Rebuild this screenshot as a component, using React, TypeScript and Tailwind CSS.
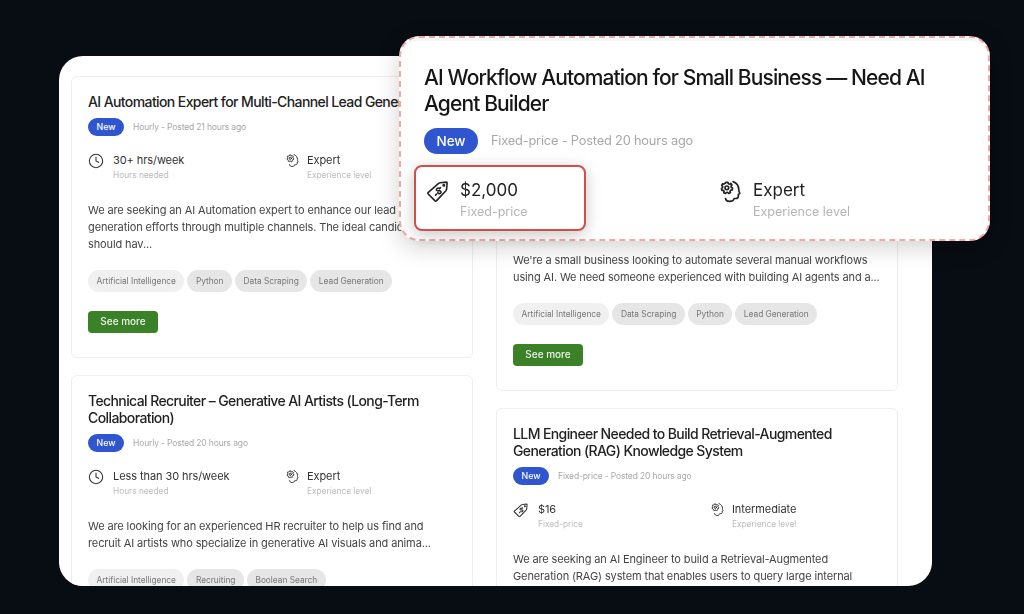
import { Clock } from "lucide-react";

const font = { fontFamily: "Inter, 'Liberation Sans', sans-serif" };

function TagIcon({ className }: { className: string }) {
  return (
    <svg viewBox="0 0 24 24" fill="none" stroke="currentColor" strokeWidth="1.6" strokeLinecap="round" strokeLinejoin="round" className={className}>
      <path d="M2.600 13.200 12.600 4.400c.5-.4 1-.6 1.600-.6l6.200-.7c.4 0 .7.3.7.7l-.5 6.300c0 .6-.3 1.100-.7 1.600l-9.300 9.900c-.5.5-1.300.5-1.800 0l-6.600-6.600c-.5-.5-.5-1.300 0-1.800Z" />
      <circle cx="17.800" cy="6.300" r="0.700" />
      <path d="M13.600 9.700c-.7-.8-1.900-.9-2.600-.2-.7.6-.7 1.500-.1 2 .5.500 1.200.4 1.900.3.800-.1 1.500-.1 1.900.4.500.6.400 1.400-.2 1.900-.8.700-1.900.6-2.700-.2M14.500 8.700l-1 1.100M10.500 15.100l-1 1.100" />
    </svg>
  );
}

function HeadIcon({ className }: { className: string }) {
  return (
    <svg viewBox="0 0 24 24" fill="none" stroke="currentColor" strokeWidth="1.6" strokeLinecap="round" strokeLinejoin="round" className={className}>
      <path d="M14.500 2.500c3.500 1.300 5.500 4.500 5.500 8 0 1-.1 1.500.8 2.800.3.600 0 1-.5 1.100l-.8.200v1.900c0 1.500-1 2.200-2.500 2.200h-1.500c-.3 2-2 2.800-4.500 2.800-1.900 0-3.400-.9-3.800-2.800" />
      <circle cx="8.500" cy="8.500" r="1.800" />
      <path d="M7.500 3.200h2l.4 1.300 1.300.5 1.200-.7 1 1.500-.9 1 .3 1.400 1.200.5-.4 1.900-1.300.1-.8 1.100.5 1.200-1.700.9-.9-1-1.400.1-.8 1-1.700-.8.4-1.300-.9-1-1.300 0-.4-1.900 1.100-.6.100-1.400-1-.9 1-1.600 1.200.4 1.200-.8Z" />
    </svg>
  );
}

type Info = { kind: "clock" | "tag"; value: string; label: string };
type Job = { title: string; meta: string; info: Info; level: string; desc: string; tags: string[]; more?: boolean };

function Tag({ text, first }: { text: string; first: boolean }) {
  return (
    <span className={`flex h-[22px] items-center rounded-full px-[8.500px] pt-[1px] text-[8.400px] tracking-[-0.04px] text-[#777] ${first ? "bg-[#f0f0f0]" : "bg-[#e6e6e6]"}`}>
      {text}
    </span>
  );
}

function Card({ job }: { job: Job }) {
  return (
    <div className={`rounded-[6px] border border-[#eeeeee] bg-white px-[16px] pt-[16px] ${job.more ? "pb-[24.500px]" : "pb-[20px]"}`}>
      <h3 className="text-[14px] font-medium leading-[17px] tracking-[-0.6px] text-[#222]">{job.title}</h3>
      <div className="mt-[8px] flex items-center gap-[9px]">
        <span className="flex h-[17.500px] w-[36px] items-center justify-center rounded-full bg-[#2f55cf] text-[8.800px] font-medium text-white">New</span>
        <span className="pt-[1px] text-[8.500px] tracking-[-0.14px] text-[#a8a8a8]">{job.meta}</span>
      </div>
      <div className="mt-[16px] grid grid-cols-[197px_1fr]">
        <div className="flex items-start gap-[9px]">
          {job.info.kind === "clock" ? (
            <Clock className="mt-[1px] h-[16px] w-[16px] text-[#333]" strokeWidth={1.6} />
          ) : (
            <TagIcon className="mt-[1px] h-[16px] w-[16px] text-[#333]" />
          )}
          <div>
            <div className="text-[11px] leading-[17px] tracking-[-0.08px] text-[#333]">{job.info.value}</div>
            <div className="text-[8.300px] leading-[13px] text-[#bbbbbb]">{job.info.label}</div>
          </div>
        </div>
        <div className="flex items-start gap-[7px]">
          <HeadIcon className="mt-[1px] h-[15px] w-[15px] text-[#333]" />
          <div>
            <div className="text-[11px] leading-[17px] tracking-[-0.08px] text-[#333]">{job.level}</div>
            <div className="text-[8.300px] leading-[13px] text-[#bbbbbb]">Experience level</div>
          </div>
        </div>
      </div>
      <p className="mt-[20px] whitespace-pre text-[11px] leading-[17px] tracking-[-0.12px] text-[#444]">{job.desc}</p>
      <div className="mt-[17px] flex gap-[3px]">
        {job.tags.map((t, i) => (
          <Tag key={t} text={t} first={i === 0} />
        ))}
      </div>
      {job.more && (
        <button className="mt-[19px] flex h-[22px] w-[70px] items-center justify-center rounded-[4px] bg-[#3a8127] text-[10px] font-medium text-[#f0f5ee]">
          See more
        </button>
      )}
    </div>
  );
}

const left: Job[] = [
  {
    title: "AI Automation Expert for Multi-Channel Lead Generation",
    meta: "Hourly - Posted 21 hours ago",
    info: { kind: "clock", value: "30+ hrs/week", label: "Hours needed" },
    level: "Expert",
    desc: "We are seeking an AI Automation expert to enhance our lead\ngeneration efforts through multiple channels. The ideal candidate\nshould hav...",
    tags: ["Artificial Intelligence", "Python", "Data Scraping", "Lead Generation"],
    more: true,
  },
  {
    title: "Technical Recruiter – Generative AI Artists (Long-Term Collaboration)",
    meta: "Hourly - Posted 20 hours ago",
    info: { kind: "clock", value: "Less than 30 hrs/week", label: "Hours needed" },
    level: "Expert",
    desc: "We are looking for an experienced HR recruiter to help us find and\nrecruit AI artists who specialize in generative AI visuals and anima...",
    tags: ["Artificial Intelligence", "Recruiting", "Boolean Search"],
  },
];

const right: Job[] = [
  {
    title: "AI Workflow Automation for Small Business — Need AI Agent Builder",
    meta: "Fixed-price - Posted 20 hours ago",
    info: { kind: "tag", value: "$2,000", label: "Fixed-price" },
    level: "Expert",
    desc: "We're a small business looking to automate several manual workflows\nusing AI. We need someone experienced with building AI agents and a...",
    tags: ["Artificial Intelligence", "Data Scraping", "Python", "Lead Generation"],
    more: true,
  },
  {
    title: "LLM Engineer Needed to Build Retrieval-Augmented Generation (RAG) Knowledge System",
    meta: "Fixed-price - Posted 20 hours ago",
    info: { kind: "tag", value: "$16", label: "Fixed-price" },
    level: "Intermediate",
    desc: "We are seeking an AI Engineer to build a Retrieval-Augmented\nGeneration (RAG) system that enables users to query large internal",
    tags: ["Artificial Intelligence"],
  },
];

export default function App() {
  return (
    <div style={font} className="relative h-[614px] w-[1024px] overflow-hidden bg-[#080c13] pl-[59px] pt-[56px]">
      <div className="grid h-[530px] w-[873px] grid-cols-[402px_402px] items-start gap-x-[23px] overflow-hidden rounded-[24px] bg-white pl-[12px] pt-[20px] blur-[0.4px]">
        <div className="flex flex-col gap-[17px]">
          {left.map((j) => (
            <Card key={j.title} job={j} />
          ))}
        </div>
        <div className="flex flex-col gap-[17px] pt-[33px]">
          {right.map((j) => (
            <Card key={j.title} job={j} />
          ))}
        </div>
      </div>

      <div className="absolute left-[399px] top-[36px] h-[205px] w-[591px] rounded-[20px] border-2 border-dashed border-[#efa8a5] bg-white pl-[23px] pr-[40px] pt-[27px] shadow-[0_6px_24px_rgba(0,0,0,0.18),inset_0_3px_0_#f6f6f6] blur-[0.4px]">
        <h2 className="text-[21px] font-medium leading-[25.500px] tracking-[-0.88px] text-[#161616]">
          AI Workflow Automation for Small Business — Need AI Agent Builder
        </h2>
        <div className="mt-[12px] flex items-center gap-[13px]">
          <span className="flex h-[26px] w-[54px] items-center justify-center rounded-full bg-[#2f55cf] text-[13.500px] font-medium text-white">New</span>
          <span className="text-[12.800px] tracking-[-0.18px] text-[#a8a8a8]">Fixed-price - Posted 20 hours ago</span>
        </div>
        <div className="-ml-[10px] mt-[11px] grid grid-cols-[306px_1fr]">
          <div className="flex h-[66px] w-[172px] items-start gap-[10px] rounded-[8px] border-2 border-[#cf4f4b] bg-white pl-[10px] pt-[11px] shadow-[0_4px_16px_rgba(0,0,0,0.22)]">
            <TagIcon className="mt-[1px] h-[24px] w-[24px] text-[#222]" />
            <div>
              <div className="text-[17px] leading-[24px] text-[#222]">$2,000</div>
              <div className="mt-[1px] text-[12.500px] leading-[18px] text-[#b5b5b5]">Fixed-price</div>
            </div>
          </div>
          <div className="flex items-start gap-[10px] pt-[13px]">
            <HeadIcon className="mt-[1px] -ml-[2px] h-[25px] w-[25px] text-[#222]" />
            <div>
              <div className="text-[17px] leading-[24px] text-[#222]">Expert</div>
              <div className="mt-[1px] text-[12.500px] leading-[18px] text-[#b5b5b5]">Experience level</div>
            </div>
          </div>
        </div>
      </div>
    </div>
  );
}
